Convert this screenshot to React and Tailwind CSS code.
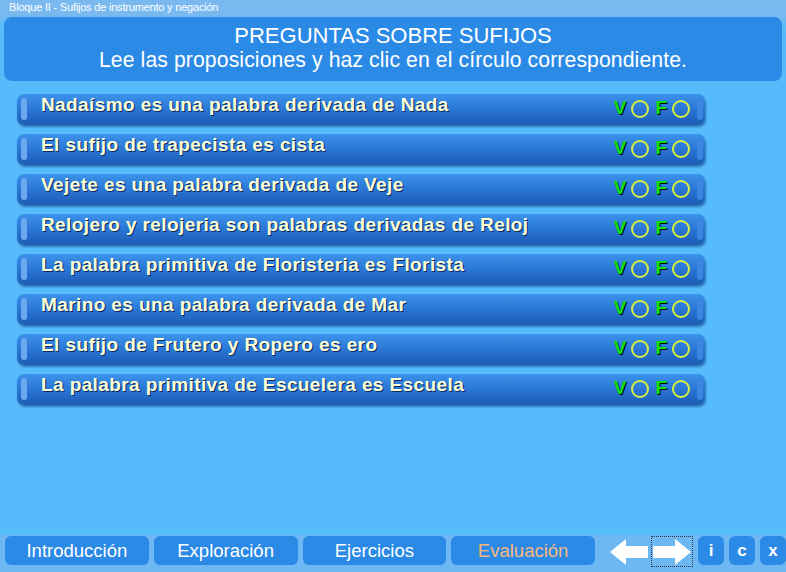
import React, { useState } from 'react';

const preguntas = [
  'Nadaísmo es una palabra derivada de Nada',
  'El sufijo de trapecista es cista',
  'Vejete es una palabra derivada de Veje',
  'Relojero y relojeria son palabras derivadas de Reloj',
  'La palabra primitiva de Floristeria es Florista',
  'Marino es una palabra derivada de Mar',
  'El sufijo de Frutero y Ropero es ero',
  'La palabra primitiva de Escuelera es Escuela',
];

const tabs = ['Introducción', 'Exploración', 'Ejercicios', 'Evaluación'];

function Circle({ active, onClick }) {
  return (
    <button
      type="button"
      onClick={onClick}
      className={`w-[18px] h-[18px] rounded-full border-2 border-[#d8f040] ${active ? 'bg-[#d8f040]' : 'bg-transparent'}`}
    />
  );
}

function Fila({ texto, valor, onSelect }) {
  return (
    <div className="relative h-[31px] w-[688px] rounded-[7px] bg-gradient-to-b from-[#3d93ea] via-[#2a76d6] to-[#1d5cb4] shadow-[1px_2px_2px_rgba(0,40,100,0.45)] flex items-center">
      <div className="absolute left-[4px] top-[4px] bottom-[5px] w-[6px] rounded-full bg-[#6aa8f0]" />
      <div className="absolute right-[2px] top-[4px] bottom-[5px] w-[6px] rounded-full bg-[#3c86e0]" />
      <span className="ml-[24px] -mt-[8px] text-[19px] font-bold text-[#ffffd8] [text-shadow:1px_1px_0_#0b2a60] tracking-[0.4px]">
        {texto}
      </span>
      <div className="ml-auto mr-[15px] -mt-[2px] flex items-center gap-[5px]">
        <span className="text-[19px] font-bold text-[#10e010] [text-shadow:1px_1px_0_#000]">V</span>
        <Circle active={valor === 'V'} onClick={() => onSelect('V')} />
        <span className="ml-[1px] text-[19px] font-bold text-[#10e010] [text-shadow:1px_1px_0_#000]">F</span>
        <Circle active={valor === 'F'} onClick={() => onSelect('F')} />
      </div>
    </div>
  );
}

function Flecha({ dir }) {
  return (
    <svg width="40" height="28" viewBox="0 0 40 28">
      {dir === 'left' ? (
        <path d="M1 14 L17 1 L17 8 L39 8 L39 20 L17 20 L17 27 Z" fill="#ffffff" />
      ) : (
        <path d="M39 14 L23 1 L23 8 L1 8 L1 20 L23 20 L23 27 Z" fill="#ffffff" />
      )}
    </svg>
  );
}

export default function App() {
  const [respuestas, setRespuestas] = useState({});

  return (
    <div className="w-[786px] h-[572px] bg-[#55bbfb] flex flex-col font-['Liberation_Sans',Arial,sans-serif] overflow-hidden">
      <div className="h-[14px] bg-[#7ab9ef] pl-[9px] text-[11px] leading-[14px] text-white tracking-[-0.2px]">
        Bloque II - Sufijos de instrumento y negación
      </div>
      <div className="pt-[3px] px-[4px] bg-gradient-to-b from-[#7ab9ef] to-[#55bbfb] to-[20%]">
        <div className="h-[64px] rounded-[8px] bg-[#2b8ae6] flex flex-col items-center text-white pt-[6px]">
          <div className="text-[22px] leading-[25px]">PREGUNTAS SOBRE SUFIJOS</div>
          <div className="text-[21.2px] leading-[24px] tracking-[0.1px]">
            Lee las proposiciones y haz clic en el círculo correspondiente.
          </div>
        </div>
      </div>
      <div className="flex flex-col gap-[9px] pl-[17px] pt-[13px]">
        {preguntas.map((p, i) => (
          <Fila
            key={i}
            texto={p}
            valor={respuestas[i]}
            onSelect={(v) => setRespuestas((prev) => ({ ...prev, [i]: v }))}
          />
        ))}
      </div>
      <div className="mt-auto h-[37px] bg-[#6db8f2] flex items-start pt-[1px] pl-[5px] gap-[5px]">
        {tabs.map((t) => (
          <button
            key={t}
            type="button"
            className={`w-[144px] h-[29px] rounded-[6px] bg-[#2b8ae6] text-[18.5px] leading-[23px] ${t === 'Evaluación' ? 'text-[#f7b87c]' : 'text-white'}`}
          >
            {t}
          </button>
        ))}
        <div className="ml-[9px] h-[31px] flex items-center">
          <Flecha dir="left" />
        </div>
        <div className="-ml-[3px] h-[31px] w-[42px] border border-dotted border-[#334] flex items-center justify-center">
          <Flecha dir="right" />
        </div>
        <div className="flex gap-[5px]">
          {['i', 'c', 'x'].map((b) => (
            <button
              key={b}
              type="button"
              className="w-[26px] h-[29px] rounded-[6px] bg-[#2b8ae6] text-white font-bold text-[17px] leading-[27px]"
            >
              {b}
            </button>
          ))}
        </div>
      </div>
    </div>
  );
}
